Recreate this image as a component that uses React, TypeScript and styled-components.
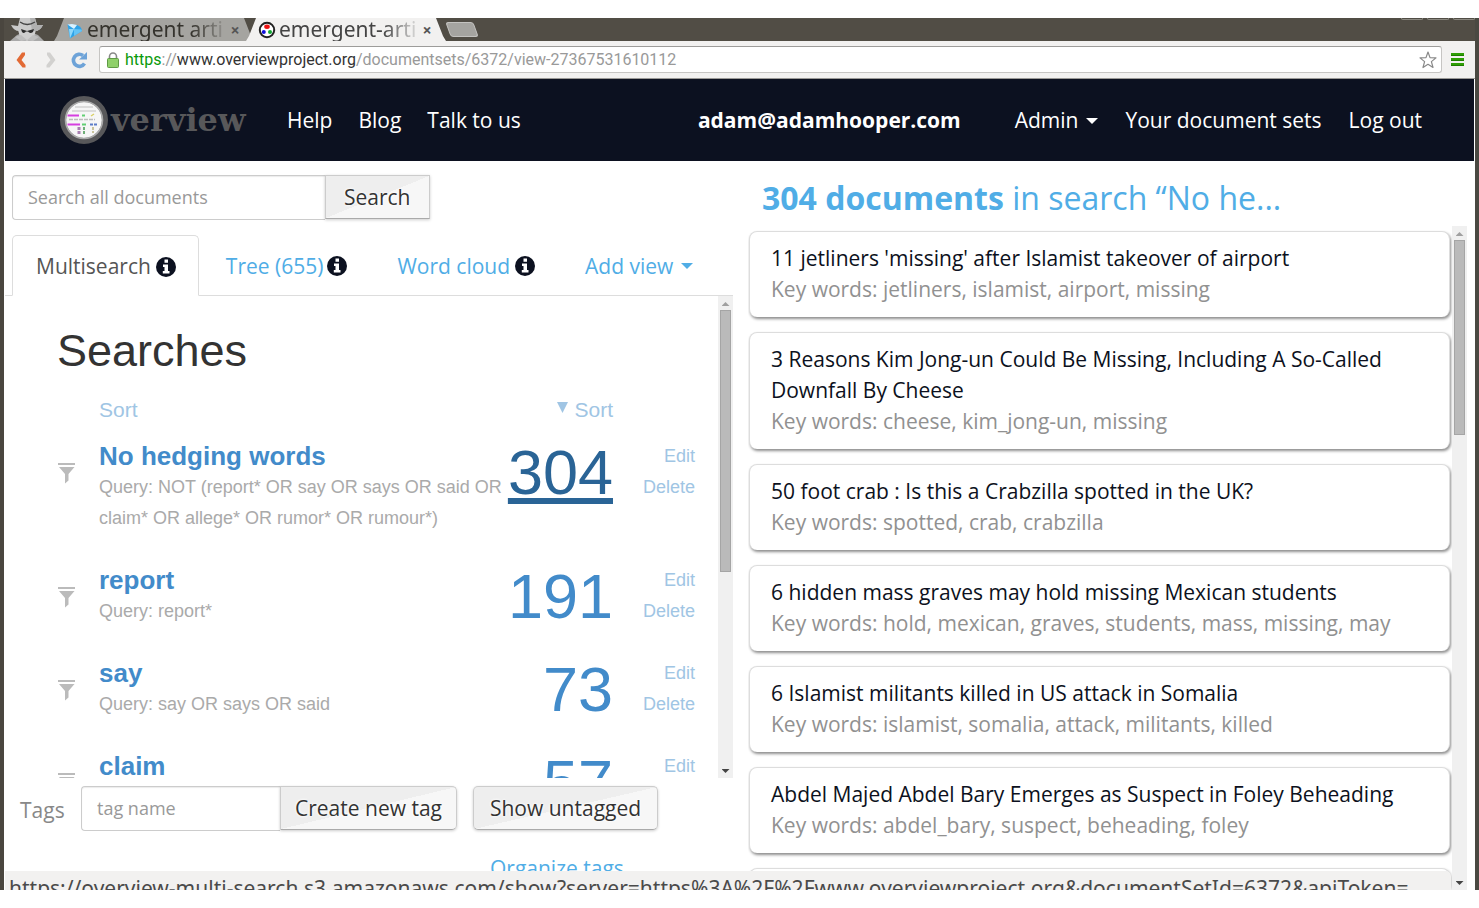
import React from "react";
import styled, { createGlobalStyle, css } from "styled-components";

const chromeFont = '"Noto Sans", sans-serif';
const pageFont = '"Open Sans", "Noto Sans", sans-serif';
const viewFont = '"Liberation Sans", Arial, sans-serif';

const GlobalStyle = createGlobalStyle`
  * { box-sizing: border-box; }
  body { margin: 0; background: #fff; font-family: ${pageFont}; font-size: 21px; line-height: 31px; color: #333; }
  a { text-decoration: none; }
  button, input { font-family: inherit; margin: 0; }
`;

const Screen = styled.div`
  padding: 18px 0;
`;

const Window = styled.div`
  position: relative;
  display: flex;
  flex-direction: column;
  height: calc(100vh - 36px);
  min-height: 500px;
  overflow: hidden;
  background: #fff;
  border-left: 4px solid #4a463f;
  border-right: 4px solid #4a4942;
`;

/* ---------- Browser chrome ---------- */

const TabStrip = styled.div`
  display: flex;
  flex: none;
  height: 23px;
  background: #514d45;
`;

const Incognito = styled.svg`
  flex: none;
  width: 34px;
  height: 23px;
  margin: 0 10px 0 6px;
`;

const BrowserTabBox = styled.div<{ $active?: boolean }>`
  position: relative;
  display: flex;
  align-items: center;
  width: 200px;
  height: 23px;
  margin-right: -8px;
  padding: 0 12px;
  z-index: ${(p) => (p.$active ? 2 : 1)};
  color: ${(p) => (p.$active ? "#444" : "#35332d")};
  &::before {
    content: "";
    position: absolute;
    inset: 0;
    z-index: -1;
    background: ${(p) => (p.$active ? "#f2f1f0" : "#a5a4a0")};
    clip-path: polygon(10px 0, 190px 0, 197px 18px, 200px 23px, 0 23px, 3px 18px);
  }
`;

const TabIcon = styled.svg`
  flex: none;
  width: 18px;
  height: 18px;
  margin-right: 3px;
`;

const TabTitle = styled.span`
  flex: 1;
  overflow: hidden;
  white-space: nowrap;
  font: 21px/23px ${chromeFont};
  mask-image: linear-gradient(to right, #000 76%, rgba(0, 0, 0, 0.15) 100%);
`;

const TabClose = styled.button`
  flex: none;
  width: 14px;
  height: 16px;
  margin-left: 4px;
  padding: 0;
  border: 0;
  background: none;
  color: #555;
  font: bold 16px/16px ${chromeFont};
`;

const NewTab = styled.button`
  width: 28px;
  height: 15px;
  margin: 4px 0 0 10px;
  padding: 0;
  border: 1px solid #c4c3c0;
  border-radius: 3px;
  background: #a5a4a0;
  transform: skewX(20deg);
`;

const WindowControls = styled.div`
  display: flex;
  gap: 4px;
  margin-left: auto;
  span {
    width: 22px;
    height: 2px;
    border: 1px solid #8b8880;
    border-top: 0;
    border-radius: 0 0 3px 3px;
  }
`;

const Toolbar = styled.div`
  display: flex;
  flex: none;
  align-items: center;
  height: 38px;
  padding: 0 11px 0 8px;
  background: #f2f1f0;
  border-bottom: 1px solid #9a9996;
`;

const ToolButton = styled.button`
  display: flex;
  flex: none;
  padding: 0;
  border: 0;
  background: none;
  margin-right: 11px;
  svg { width: 18px; height: 20px; }
`;

const AddressBar = styled.div`
  display: flex;
  flex: 1;
  align-items: center;
  min-width: 0;
  height: 27px;
  padding: 0 4px 0 7px;
  background: #fff;
  border: 1px solid #c6c5c3;
  border-top-color: #9d9c9a;
  border-radius: 3px;
`;

const Url = styled.span`
  flex: 1;
  overflow: hidden;
  margin-left: 6px;
  white-space: nowrap;
  color: #999;
  font: 16px/24px Roboto, sans-serif;
  b { font-weight: 400; color: #0a9a0a; }
  strong { font-weight: 400; color: #333; }
`;

const MenuButton = styled.button`
  display: flex;
  flex-direction: column;
  gap: 2px;
  width: 13px;
  margin: 0 0 0 9px;
  padding: 0;
  border: 0;
  background: none;
  span { height: 3px; width: 13px; background: #2f9e05; border-bottom: 1px solid #1e7d00; }
`;

/* ---------- Site header ---------- */

const Navbar = styled.header`
  display: flex;
  flex: none;
  align-items: center;
  height: 82px;
  margin: 0 1px;
  padding: 0 52px;
  background: #0c1120;
  color: #fff;
  white-space: nowrap;
`;

const Logo = styled.a`
  display: flex;
  align-items: center;
  width: 230px;
  color: #58585a;
  font: bold 32px/40px "DejaVu Serif", serif;
  svg { width: 54px; height: 54px; flex: none; }
`;

const NavLinks = styled.nav<{ $end?: boolean }>`
  display: flex;
  gap: ${(p) => (p.$end ? 27 : 26)}px;
  margin-left: ${(p) => (p.$end ? 54 : 0)}px;
  padding-top: 1px;
  a { display: flex; align-items: center; color: #fff; }
`;

const Email = styled.strong`
  margin-left: auto;
  padding-top: 1px;
`;

const Caret = styled.span`
  display: inline-block;
  margin-left: 8px;
  vertical-align: middle;
  border-top: 6px solid currentColor;
  border-left: 6px solid transparent;
  border-right: 6px solid transparent;
`;

/* ---------- Main area ---------- */

const Main = styled.main`
  display: grid;
  grid-template-columns: minmax(0, 728fr) minmax(0, 719fr);
  gap: 15px;
  flex: 1;
  min-height: 0;
  padding: 0 8px 0 1px;
`;

const Column = styled.section`
  display: flex;
  flex-direction: column;
  min-height: 0;
`;

const SearchForm = styled.form`
  display: flex;
  margin: 14px 0 15px 7px;
`;

const TextInput = styled.input<{ $width: number }>`
  width: ${(p) => p.$width}px;
  height: 45px;
  padding: 0 15px 2px;
  border: 1px solid #ccc;
  border-right: 0;
  border-radius: 4px 0 0 4px;
  box-shadow: inset 0 1px 1px rgba(0, 0, 0, 0.08);
  font-size: 18px;
  &::placeholder { color: #999; opacity: 1; }
`;

const Button = styled.button<{ $shape?: "square" | "right" }>`
  height: 44px;
  padding: 0 16px;
  border: 1px solid #ccc;
  border-bottom-color: #aaa;
  border-radius: 5px;
  ${(p) => p.$shape === "square" && css`border-radius: 0; padding: 0 18px;`}
  ${(p) => p.$shape === "right" && css`border-radius: 0 5px 5px 0; padding: 0 14px;`}
  background: linear-gradient(to bottom right, #eeeeee 50%, #f7f7f7 50%);
  box-shadow: 0 1px 3px rgba(0, 0, 0, 0.2);
  color: #333;
  font-size: 21px;
  text-shadow: 0 0 3px #fff, 0 0 3px #fff;
`;

const ViewTabs = styled.nav`
  display: flex;
  flex: none;
  gap: 3px;
  height: 61px;
  padding-left: 7px;
  border-bottom: 1px solid #ddd;
`;

const ViewTab = styled.a<{ $active?: boolean; $tight?: boolean }>`
  display: flex;
  align-items: center;
  height: ${(p) => (p.$active ? 61 : 60)}px;
  padding: 2px 22px 0 23px;
  border: 1px solid transparent;
  border-radius: 5px 5px 0 0;
  color: #50ade6;
  white-space: nowrap;
  ${(p) => p.$active && css`border-color: #ddd; border-bottom-color: #fff; background: #fff; color: #555;`}
  svg { width: 20px; height: 20px; margin-left: ${(p) => (p.$tight ? 4 : 5)}px; }
`;

const ScrollArea = styled.div`
  display: flex;
  flex: 1;
  min-height: 0;
  overflow: hidden;
`;

const ScrollBody = styled.div`
  flex: 1;
  min-width: 0;
  overflow: hidden;
`;

const ScrollTrack = styled.div`
  display: flex;
  flex: none;
  flex-direction: column;
  align-items: center;
  width: 15px;
  background: #f0f0f0;
`;

const ScrollArrow = styled.span<{ $down?: boolean }>`
  flex: none;
  width: 8px;
  height: 4px;
  margin: ${(p) => (p.$down ? "4px 0 5px" : "6px 0 4px")};
  background: ${(p) => (p.$down ? "#444" : "#a0a0a0")};
  clip-path: ${(p) => (p.$down ? "polygon(0 0, 100% 0, 50% 100%)" : "polygon(50% 0, 100% 100%, 0 100%)")};
`;

const ScrollThumb = styled.span<{ $share: number }>`
  flex: 0 0 ${(p) => p.$share}%;
  width: 11px;
  margin-bottom: auto;
  background: #bababa;
  border: 1px solid #a5a5a5;
`;

function Scrollbar({ share }: { share: number }) {
  return (
    <ScrollTrack>
      <ScrollArrow />
      <ScrollThumb $share={share} />
      <ScrollArrow $down />
    </ScrollTrack>
  );
}

function InfoIcon() {
  return (
    <svg viewBox="0 0 20 20" aria-hidden="true">
      <circle cx="10" cy="10" r="10" fill="#0c1120" />
      <path d="M8.5 2.5 H12 V5.8 H8.5Z M7 7.5 H12 V14 H13.5 V16.5 H6.8 V14 H8.5 V10 H7Z" fill="#fff" />
    </svg>
  );
}

/* ---------- Multisearch view ---------- */

const Searches = styled.div`
  padding: 30px 23px 0 52px;
  font-family: ${viewFont};
`;

const Heading = styled.h1`
  margin: 0 0 18px;
  color: #333;
  font-size: 45px;
  font-weight: 400;
  line-height: 50px;
`;

const SearchTable = styled.table`
  width: 100%;
  border-collapse: collapse;
  th { padding: 0 0 16px; font-weight: 400; text-align: left; }
  td { padding: 0 0 31px; vertical-align: top; }
`;

const Cell = styled.td<{ $width?: number }>`
  width: ${(p) => (p.$width ? p.$width + "px" : "auto")};
  text-align: ${(p) => (p.$width && p.$width > 50 ? "right" : "left")};
`;

const PaleLink = styled.a<{ $size: number }>`
  color: #a0c5e4;
  font-size: ${(p) => p.$size}px;
`;

const SortCell = styled.th`
  && { text-align: right; }
  svg { width: 11px; height: 11px; margin: 0 6px 7px 0; vertical-align: middle; }
`;

const FilterIcon = styled.svg`
  display: block;
  width: 18px;
  height: 22px;
  margin-top: 21px;
`;

const SearchName = styled.a`
  display: block;
  color: #428bca;
  font-size: 26px;
  font-weight: 700;
`;

const Query = styled.div`
  color: #aaa;
  font-size: 18px;
`;

const Count = styled.a<{ $active?: boolean }>`
  display: block;
  color: ${(p) => (p.$active ? "#2a6496" : "#428bca")};
  font-size: 63px;
  line-height: 62px;
  ${(p) => p.$active && css`
    text-decoration: underline;
    text-decoration-thickness: 6px;
    text-underline-offset: 4px;
    text-decoration-skip-ink: none;
  `}
`;

const ActionLink = styled(PaleLink)`
  display: block;
`;

const searches = [
  { name: "No hedging words", query: "NOT (report* OR say OR says OR said OR claim* OR allege* OR rumor* OR rumour*)", count: 304, active: true },
  { name: "report", query: "report*", count: 191 },
  { name: "say", query: "say OR says OR said", count: 73 },
  { name: "claim", query: "claim*", count: 57 },
];

/* ---------- Tags ---------- */

const TagBar = styled.div`
  flex: none;
  height: 112px;
  padding: 8px 0 0 15px;
`;

const TagForm = styled.form`
  display: flex;
  label { width: 61px; color: #888; line-height: 48px; }
  button + button { margin-left: 16px; }
`;

const OrganizeLink = styled.a`
  display: block;
  margin: 19px 0 0 470px;
  color: #50ade6;
`;

/* ---------- Document list ---------- */

const ListTitle = styled.h2`
  flex: none;
  margin: 0 0 7px;
  padding: 16px 160px 0 14px;
  overflow: hidden;
  white-space: nowrap;
  text-overflow: ellipsis;
  color: #50ade6;
  font-size: 32px;
  font-weight: 400;
  line-height: 42px;
`;

const DocList = styled.ul`
  display: flex;
  flex-direction: column;
  gap: 15px;
  margin: 0;
  padding: 5px 2px 5px 1px;
  list-style: none;
`;

const DocCard = styled.li`
  flex: none;
  padding: 11px 21px 12px;
  border: 1px solid #ddd;
  border-bottom: 0;
  border-radius: 8px;
  background: #fff;
  box-shadow: 1px 2px 3px rgba(0, 0, 0, 0.45);
  a { display: block; color: #0c1120; }
  div { color: #919191; }
`;

const docs = [
  ["11 jetliners 'missing' after Islamist takeover of airport", "jetliners, islamist, airport, missing"],
  ["3 Reasons Kim Jong-un Could Be Missing, Including A So-Called Downfall By Cheese", "cheese, kim_jong-un, missing"],
  ["50 foot crab : Is this a Crabzilla spotted in the UK?", "spotted, crab, crabzilla"],
  ["6 hidden mass graves may hold missing Mexican students", "hold, mexican, graves, students, mass, missing, may"],
  ["6 Islamist militants killed in US attack in Somalia", "islamist, somalia, attack, militants, killed"],
  ["Abdel Majed Abdel Bary Emerges as Suspect in Foley Beheading", "abdel_bary, suspect, beheading, foley"],
  ["", ""],
];

const StatusBar = styled.div`
  position: absolute;
  left: 1px;
  bottom: 0;
  height: 19px;
  padding: 0 43px 0 4px;
  overflow: hidden;
  border-radius: 0 5px 0 0;
  background: #f2f1f0;
  color: #4a4a4a;
  white-space: nowrap;
  font: 21px/34px ${chromeFont};
`;

export default function App() {
  return (
    <Screen>
      <GlobalStyle />
      <Window>
        <TabStrip>
          <Incognito viewBox="0 0 34 23">
            <path d="M0 23 L7 17 L12 15 H23 L28 17 L34 23Z" fill="#a9a9a9" />
            <path d="M8 12 H26 L24 19 L17 23 L10 19Z" fill="#cfcfcf" />
            <path d="M10 0 H25 L27 7 L33 7 Q30 13 25 13 H9 Q4 13 1 7 L8 8Z" fill="#cacaca" />
            <path d="M20 0 H25 L27 7 L33 7 Q30 13 25 13 H22Z" fill="#b0b0b0" />
            <path d="M10 4 Q17 9 25 4" fill="none" stroke="#444" strokeWidth="1.4" />
            <path d="M11 11 L17 13 L24 11 L23 14 Q20 16 18 13.5 H16 Q14 16 12 14Z" fill="#2b2b2b" />
            <path d="M5 19 L11 17 L17 22 L11 23 Z M29 19 L23 17 L17 22 L23 23 Z" fill="#bebebe" />
          </Incognito>
          <BrowserTabBox>
            <TabIcon viewBox="0 0 18 18">
              <path d="M1.5 3.5 L11 4 Q16 6 16 10 L4 17.5 Z" fill="#2fa3e8" />
              <path d="M1.5 3.5 L6 3 L11 4 L8 8 Z" fill="#d9f2ff" />
              <path d="M3 8 L8 8 L4 17.5Z" fill="#8fd8fb" />
              <path d="M8 8 L15.5 8.5 L16 10 L8 15Z" fill="#64c4f6" />
            </TabIcon>
            <TabTitle>emergent arti</TabTitle>
            <TabClose aria-label="Close tab">×</TabClose>
          </BrowserTabBox>
          <BrowserTabBox $active>
            <TabIcon viewBox="0 0 18 18">
              <circle cx="9" cy="9" r="7.2" fill="#fff" stroke="#222" strokeWidth="2" />
              <ellipse cx="9" cy="5.8" rx="2.8" ry="2.2" fill="#e11" />
              <circle cx="5.8" cy="11" r="2" fill="#11d" />
              <circle cx="12" cy="11" r="2" fill="#1a3" />
            </TabIcon>
            <TabTitle>emergent-arti</TabTitle>
            <TabClose aria-label="Close tab">×</TabClose>
          </BrowserTabBox>
          <NewTab aria-label="New tab" />
          <WindowControls><span /><span /><span /></WindowControls>
        </TabStrip>

        <Toolbar>
          <ToolButton aria-label="Back">
            <svg viewBox="0 0 18 20"><path d="M10 2.5 L13 2.5 V5 L9.5 10 L13.5 15 V17.5 H10.5 L4.5 10 Z" fill="#e26a35" /></svg>
          </ToolButton>
          <ToolButton aria-label="Forward">
            <svg viewBox="0 0 18 20"><path d="M9 2.5 L6 2.5 V5 L9.5 10 L5.5 15 V17.5 H8.5 L14.5 10 Z" fill="#d2d1cf" /></svg>
          </ToolButton>
          <ToolButton aria-label="Reload">
            <svg viewBox="0 0 18 20">
              <path d="M13 5.5 A6 6 0 1 0 14.5 13.5" fill="none" stroke="#6ea3d8" strokeWidth="3.6" />
              <path d="M9 9.5 L17 9.5 L17 2 Z" fill="#6ea3d8" />
            </svg>
          </ToolButton>
          <AddressBar>
            <svg width="12" height="16" viewBox="0 0 12 16">
              <path d="M2.5 8 V4.5 A3.5 3.5 0 0 1 9.5 4.5 V8" fill="none" stroke="#888" strokeWidth="1.6" />
              <rect x="0.5" y="6.5" width="11" height="9" rx="1" fill="#8fd06a" stroke="#5f9a45" />
            </svg>
            <Url><b>https</b>://<strong>www.overviewproject.org</strong>/documentsets/6372/view-27367531610112</Url>
            <svg width="18" height="18" viewBox="0 0 18 18">
              <path d="M9 1 L11 6.6 L17 6.9 L12.4 10.6 L14 16.5 L9 13.3 L4 16.5 L5.6 10.6 L1 6.9 L7 6.6 Z" fill="none" stroke="#888" strokeWidth="1.2" strokeLinejoin="round" />
            </svg>
          </AddressBar>
          <MenuButton aria-label="Menu"><span /><span /><span /></MenuButton>
        </Toolbar>

        <Navbar>
          <Logo href="#" aria-label="Overview">
            <svg viewBox="0 0 54 54">
              <circle cx="27" cy="27" r="21" fill="#f6f6f6" stroke="#58585a" strokeWidth="6" />
              <circle cx="27" cy="27" r="18.5" fill="none" stroke="#aaa" strokeWidth="1.6" />
              <g strokeWidth="1.4" fill="none">
                <path d="M18 14 H36 M15 18 H39" stroke="#d2d2d2" />
                <path d="M12 26.500 H38" stroke="#bcbcbc" strokeDasharray="4 1" />
                <path d="M10.500 22.500 H22 M10.500 31.500 H23" stroke="#d63fe0" strokeWidth="2" />
                <path d="M25 22.500 H28 M25 31.500 H29" stroke="#62cf74" strokeWidth="2" />
                <path d="M33 31.500 H40" stroke="#5c7cc8" strokeWidth="2" strokeDasharray="3 1" />
                <path d="M34 23 L37 21" stroke="#d9cf63" />
                <path d="M22 34 V41" stroke="#a77fb0" strokeWidth="3" strokeDasharray="3 1" />
                <path d="M27 34 V41" stroke="#6faf78" strokeWidth="2" strokeDasharray="3 1" />
                <path d="M36 34 V40" stroke="#c9c39a" strokeWidth="2" strokeDasharray="3 1" />
              </g>
            </svg>
            verview
          </Logo>
          <NavLinks>
            <a href="#">Help</a>
            <a href="#">Blog</a>
            <a href="#">Talk to us</a>
          </NavLinks>
          <Email>adam@adamhooper.com</Email>
          <NavLinks $end>
            <a href="#">Admin<Caret /></a>
            <a href="#">Your document sets</a>
            <a href="#">Log out</a>
          </NavLinks>
        </Navbar>

        <Main>
          <Column>
            <SearchForm onSubmit={(e) => e.preventDefault()}>
              <TextInput $width={313} placeholder="Search all documents" aria-label="Search all documents" />
              <Button $shape="square">Search</Button>
            </SearchForm>
            <ViewTabs>
              <ViewTab href="#" $active>Multisearch<InfoIcon /></ViewTab>
              <ViewTab href="#" $tight>Tree (655)<InfoIcon /></ViewTab>
              <ViewTab href="#">Word cloud<InfoIcon /></ViewTab>
              <ViewTab href="#">Add view<Caret /></ViewTab>
            </ViewTabs>
            <ScrollArea>
              <ScrollBody>
                <Searches>
                  <Heading>Searches</Heading>
                  <SearchTable>
                    <thead>
                      <tr>
                        <th />
                        <th><PaleLink href="#" $size={21}>Sort</PaleLink></th>
                        <SortCell>
                          <PaleLink href="#" $size={21}>
                            <svg viewBox="0 0 11 11"><path d="M0 0 H11 L5.5 11Z" fill="#a0c5e4" /></svg>
                            Sort
                          </PaleLink>
                        </SortCell>
                        <th />
                      </tr>
                    </thead>
                    <tbody>
                      {searches.map((s) => (
                        <tr key={s.name}>
                          <Cell $width={42}>
                            <FilterIcon viewBox="0 0 18 22">
                              <path d="M1 1 H18 V3 H1Z M2 5 H17.5 L11.5 12 V18.500 L8 21.5 V12Z" fill="#bbb" />
                            </FilterIcon>
                          </Cell>
                          <Cell>
                            <SearchName href="#">{s.name}</SearchName>
                            <Query>Query: {s.query}</Query>
                          </Cell>
                          <Cell $width={105}><Count href="#" $active={s.active}>{s.count}</Count></Cell>
                          <Cell $width={82}>
                            <ActionLink href="#" $size={18}>Edit</ActionLink>
                            <ActionLink href="#" $size={18}>Delete</ActionLink>
                          </Cell>
                        </tr>
                      ))}
                    </tbody>
                  </SearchTable>
                </Searches>
              </ScrollBody>
              <Scrollbar share={54.4} />
            </ScrollArea>
            <TagBar>
              <TagForm onSubmit={(e) => e.preventDefault()}>
                <label htmlFor="tag-name">Tags</label>
                <TextInput id="tag-name" $width={199} placeholder="tag name" />
                <Button $shape="right">Create new tag</Button>
                <Button type="button">Show untagged</Button>
              </TagForm>
              <OrganizeLink href="#">Organize tags</OrganizeLink>
            </TagBar>
          </Column>

          <Column>
            <ListTitle><strong>304 documents</strong> in search “No he...</ListTitle>
            <ScrollArea>
              <ScrollBody>
                <DocList>
                  {docs.map(([title, words], i) => (
                    <DocCard key={i}>
                      <a href="#">{title}</a>
                      {words && <div>Key words: {words}</div>}
                    </DocCard>
                  ))}
                </DocList>
              </ScrollBody>
              <Scrollbar share={29.4} />
            </ScrollArea>
          </Column>
        </Main>

        <StatusBar>
          https://overview-multi-search.s3.amazonaws.com/show?server=https%3A%2F%2Fwww.overviewproject.org&amp;documentSetId=6372&amp;apiToken=
        </StatusBar>
      </Window>
    </Screen>
  );
}
